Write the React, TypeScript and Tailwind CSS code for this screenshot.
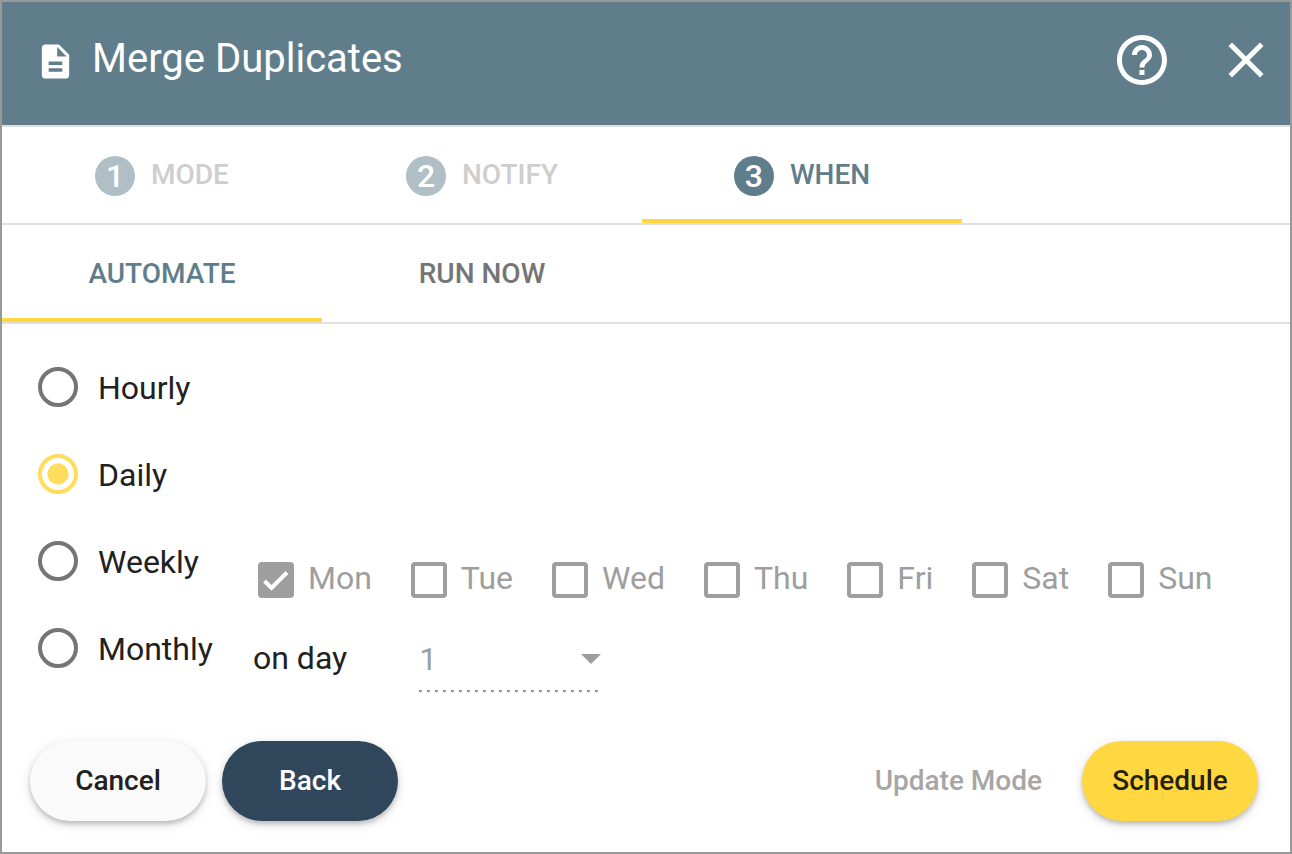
import { useState } from 'react'
import { MdArrowDropDown, MdClose, MdDescription, MdHelpOutline } from 'react-icons/md'
import clsx from 'clsx'

const steps = ['MODE', 'NOTIFY', 'WHEN']
const views = ['AUTOMATE', 'RUN NOW']
const frequencies = ['Hourly', 'Daily', 'Weekly', 'Monthly']
const weekDays = ['Mon', 'Tue', 'Wed', 'Thu', 'Fri', 'Sat', 'Sun']
const monthDays = Array.from({ length: 31 }, (_, i) => i + 1)

const raised = 'shadow-[0_3px_4px_rgba(0,0,0,0.18),0_3px_12px_rgba(0,0,0,0.14)]'

const Header = () => (
  <header className="flex items-center bg-[#607d8b] pt-7 pb-[35px] pl-[33px] pr-[14px] text-white">
    <MdDescription className="mt-0.5 size-[41px] shrink-0" />
    <h1 className="-mt-0.5 ml-4 grow text-[40px] leading-[56px]">Merge Duplicates</h1>
    <button type="button" aria-label="Help">
      <MdHelpOutline className="size-[60px]" />
    </button>
    <button type="button" aria-label="Close" className="ml-11">
      <MdClose className="size-[60px]" />
    </button>
  </header>
)

const DayCheckbox = ({ day }: { day: string }) => (
  <label className="flex items-center gap-[14px] text-[32px] leading-9 text-[#9e9e9e]">
    <span className="relative size-9 shrink-0">
      <input
        type="checkbox"
        disabled
        defaultChecked={day === 'Mon'}
        className="peer block size-9 appearance-none rounded-[4px] border-4 border-[#9e9e9e] checked:bg-[#9e9e9e]"
      />
      <svg
        viewBox="0 0 36 36"
        className="absolute inset-0 hidden size-9 fill-none stroke-white stroke-[4] peer-checked:block"
      >
        <path d="M6.5 19 L13.5 26 L29 10.5" />
      </svg>
    </span>
    <span className="-mt-1">{day}</span>
  </label>
)

const App = () => {
  const [view, setView] = useState('AUTOMATE')
  const [frequency, setFrequency] = useState('Daily')

  return (
    <div className="flex min-h-screen flex-col border-2 border-[#999] bg-white font-[Roboto,sans-serif] text-[#212121]">
      <Header />

      <nav className="flex border-y-2 border-[#e0e0e0]">
        {steps.map((step, i) => {
          const active = step === 'WHEN'
          return (
            <button
              key={step}
              type="button"
              className={clsx(
                'flex h-24 w-80 items-center justify-center gap-4 border-b-4 pt-1.5 text-[28px] font-medium',
                active ? 'border-[#ffd740] text-[#607d8b]' : 'border-transparent text-[#cecece]'
              )}
            >
              <span
                className={clsx(
                  'flex size-10 items-center justify-center rounded-full text-[32px] leading-10 text-white',
                  active ? 'bg-[#607d8b]' : 'bg-[#b0bec5]'
                )}
              >
                {i + 1}
              </span>
              <span className="-mt-0.5">{step}</span>
            </button>
          )
        })}
      </nav>

      <nav className="flex border-b-2 border-[#e0e0e0]">
        {views.map((name) => (
          <button
            key={name}
            type="button"
            onClick={() => setView(name)}
            className={clsx(
              'h-[97px] w-80 border-b-4 pt-1 text-[28px] font-medium',
              view === name ? 'border-[#ffd740] text-[#607d8b]' : 'border-transparent text-[#757575]'
            )}
          >
            {name}
          </button>
        ))}
      </nav>

      <main className="flex px-9 pt-5">
        <fieldset className="w-[215px] shrink-0">
          {frequencies.map((name) => (
            <label key={name} className="flex h-[87px] items-center gap-5 text-[32px]">
              <input
                type="radio"
                name="frequency"
                checked={frequency === name}
                onChange={() => setFrequency(name)}
                className="-mt-0.5 size-10 shrink-0 appearance-none rounded-full border-4 border-[#757575] checked:border-[#ffdc5b] checked:bg-[radial-gradient(circle,#ffdc5b_10px,transparent_11px)]"
              />
              {name}
            </label>
          ))}
        </fieldset>

        <div className="flex grow flex-col justify-end">
          <div className="mb-7 flex gap-[39px] pl-[5px]">
            {weekDays.map((day) => (
              <DayCheckbox key={day} day={day} />
            ))}
          </div>
          <div className="flex gap-[72px] text-[32px]">
            <label htmlFor="month-day" className="leading-[64px]">
              on day
            </label>
            <div className="relative w-[180px] bg-[repeating-linear-gradient(to_right,#949494_0_3px,transparent_3px_8px)] bg-[length:100%_2px] bg-bottom bg-no-repeat text-[#9e9e9e]">
              <select id="month-day" disabled className="h-[66px] w-full appearance-none opacity-100">
                {monthDays.map((day) => (
                  <option key={day}>{day}</option>
                ))}
              </select>
              <MdArrowDropDown className="pointer-events-none absolute -right-4 top-2 size-12" />
            </div>
          </div>
        </div>
      </main>

      <footer className="mt-auto flex items-center gap-4 px-7 pb-[31px] pr-8 text-[28px] font-medium">
        <button type="button" className={clsx('h-20 w-44 rounded-full bg-[#fafafa]', raised)}>
          Cancel
        </button>
        <button type="button" className={clsx('h-20 w-44 rounded-full bg-[#2f465b] text-white', raised)}>
          Back
        </button>
        <button type="button" disabled className="ml-auto mr-6 text-[#a6a6a6]">
          Update Mode
        </button>
        <button type="button" className={clsx('h-20 w-44 rounded-full bg-[#ffd740] text-black/87', raised)}>
          Schedule
        </button>
      </footer>
    </div>
  )
}

export default App
